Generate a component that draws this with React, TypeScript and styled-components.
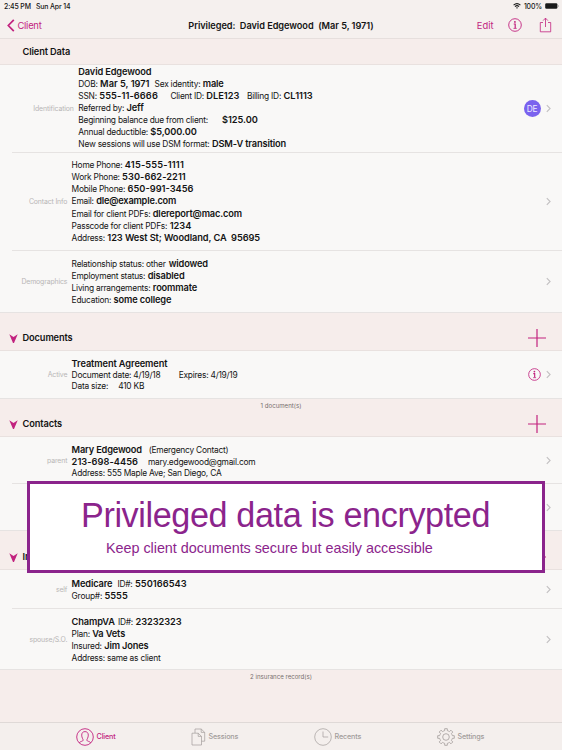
import React from "react";
import styled, { createGlobalStyle } from "styled-components";

const PINK = "#c2237f";

const Global = createGlobalStyle`
  * { box-sizing: border-box; }
  html, body { margin: 0; padding: 0; }
  body { font-family: Inter, "Liberation Sans", sans-serif; color: #141414; background: #f6edeb; }
`;

const Screen = styled.div`
  position: relative;
  width: 562px;
  height: 750px;
  overflow: hidden;
  display: flex;
  flex-direction: column;
  background: #f6edeb;
`;

const StatusBar = styled.div`
  height: 12px;
  flex: none;
  display: flex;
  align-items: center;
  justify-content: space-between;
  padding: 0 3px 0 4px;
  background: #f5f0ee;
  font-size: 6.9px;
  font-weight: 500;
  letter-spacing: -0.12px;
  line-height: 11px;
  white-space: pre;
`;

const StatusGroup = styled.div`
  display: flex;
  align-items: center;
  gap: 3px;
`;

const NavBar = styled.header`
  height: 27px;
  flex: none;
  display: grid;
  grid-template-columns: 1fr auto 1fr;
  align-items: center;
  padding: 0 10px 0 7px;
  background: #f5f0ee;
  border-bottom: 1px solid #e6dfdd;
`;

const BackButton = styled.div`
  display: flex;
  align-items: center;
  gap: 2.5px;
  color: ${PINK};
  font-size: 9.4px;
  letter-spacing: -0.25px;
`;

const NavTitle = styled.h1`
  margin: 0 -1.5px 0 1.5px;
  font-size: 9.2px;
  font-weight: 600;
  letter-spacing: -0.05px;
  white-space: pre;
`;

const NavActions = styled.div`
  display: flex;
  align-items: center;
  justify-content: flex-end;
  color: ${PINK};
  font-size: 9.4px;

  svg:first-of-type { margin: 0 17.5px 0 14px; }
`;

const SectionHeader = styled.div<{ $height: number }>`
  height: ${(p) => p.$height}px;
  flex: none;
  position: relative;
  display: flex;
  align-items: flex-end;
  padding: 0 16px 6px 9px;
  border-bottom: 1px solid #e9e1df;
`;

const SectionMark = styled.span`
  width: 13.5px;
  display: flex;
  align-self: flex-end;
  padding-bottom: 1px;
`;

const SectionTitle = styled.h2`
  margin: 0;
  flex: 1;
  font-size: 9.25px;
  line-height: 12px;
  font-weight: 600;
  letter-spacing: -0.12px;
`;

const AddIcon = styled.span`
  display: flex;
  margin-bottom: -3px;
`;

const SectionNote = styled.div`
  position: absolute;
  top: 2px;
  left: 0;
  width: 562px;
  text-align: center;
  font-size: 6.1px;
  line-height: 9px;
  color: #77706f;
`;

const RecordRow = styled.div<{ $height: number; $last?: boolean }>`
  height: ${(p) => p.$height}px;
  flex: none;
  display: grid;
  grid-template-columns: 67.3px 1fr auto;
  align-items: center;
  padding-right: 11px;
  background:
    linear-gradient(#e6e3e2, #e6e3e2) ${(p) => (p.$last ? "0" : "12px")} 100% / 562px 1px no-repeat,
    #f9f8f7;
`;

const RecordLabel = styled.div<{ $shift?: number }>`
  margin-right: ${(p) => -(p.$shift ?? 0)}px;
  text-align: right;
  font-size: 6.9px;
  line-height: 10px;
  letter-spacing: -0.13px;
  color: #b8b6b6;
`;

const Lines = styled.div<{ $indent: number; $top: number }>`
  align-self: start;
  padding: ${(p) => p.$top}px 0 0 ${(p) => p.$indent}px;
`;

const Line = styled.div<{ $h?: number }>`
  height: ${(p) => p.$h ?? 12.1}px;
  display: flex;
  align-items: baseline;
  line-height: 12px;
  white-space: pre;
`;

const Plain = styled.span<{ $gap?: number }>`
  margin-left: ${(p) => p.$gap ?? 0}px;
  font-size: 8.4px;
  letter-spacing: -0.23px;
`;

const Strong = styled.span<{ $gap?: number; $ls?: number }>`
  margin-left: ${(p) => p.$gap ?? 2.4}px;
  font-size: 9.25px;
  font-weight: 600;
  letter-spacing: ${(p) => p.$ls ?? -0.14}px;
`;

const RowActions = styled.div`
  display: flex;
  align-items: center;
  gap: 5.5px;
  color: ${PINK};
`;

const Avatar = styled.span`
  width: 17px;
  height: 17px;
  border-radius: 50%;
  display: flex;
  align-items: center;
  justify-content: center;
  background: #7a62ee;
  color: #efeaff;
  font-size: 8.3px;
  letter-spacing: -0.2px;
`;

const FooterArea = styled.div`
  position: relative;
  flex: 1;
`;

const TabBar = styled.nav`
  height: 28px;
  flex: none;
  display: grid;
  grid-template-columns: 115px 123px 123px 1fr;
  padding-left: 76px;
  background: #f4efed;
  border-top: 1px solid #dfd9d7;
`;

const Tab = styled.div<{ $active?: boolean }>`
  display: flex;
  align-items: center;
  gap: 2.6px;
  color: ${(p) => (p.$active ? PINK : "#a29c9b")};
  font-size: 7.2px;
  font-weight: 500;
  letter-spacing: -0.17px;
`;

const Banner = styled.div`
  position: absolute;
  left: 27px;
  top: 481px;
  width: 518px;
  height: 92px;
  border: 3px solid #8b248c;
  background: #fff;
  color: #8b248c;
  font-family: "Liberation Sans", sans-serif;
  white-space: pre;
`;

const BannerTitle = styled.div`
  padding: 10px 0 0 51px;
  font-size: 34.2px;
  line-height: 42px;
  letter-spacing: -0.39px;
`;

const BannerText = styled.div`
  padding: 3px 0 0 76px;
  font-size: 14.4px;
  line-height: 18px;
  letter-spacing: -0.04px;
`;

const Chevron = () => (
  <svg width="5" height="9" viewBox="0 0 5 9" fill="none" stroke="#c3c0c2" strokeWidth="1.1">
    <path d="M0.8 1.1 4.1 4.5 0.8 7.9" />
  </svg>
);

const InfoIcon = ({ size }: { size: number }) => (
  <svg width={size} height={size} viewBox="0 0 14 14" fill="none" stroke="currentColor" strokeWidth="0.9">
    <circle cx="7" cy="7" r="6.3" />
    <circle cx="6.9" cy="3.9" r="0.95" fill="currentColor" stroke="none" />
    <path d="M5.7 6H7.2V10.3" strokeWidth="1.2" />
    <path d="M5.5 10.4H8.7" strokeWidth="0.8" />
  </svg>
);

const ShareIcon = () => (
  <svg width="13" height="16" viewBox="0 0 13 16" fill="none" stroke="currentColor" strokeWidth="0.8">
    <path d="M4 5.5H1.3V14.8H11.7V5.5H9M6.5 10V1.2M4.1 3.6 6.5 1.1 8.9 3.6" />
  </svg>
);

const Mark = () => (
  <svg width="9" height="9" viewBox="0 0 9 9">
    <path d="M0.3 0.2 4.5 2.9 8.7 0.2 5 8.9H4Z" fill={PINK} />
  </svg>
);

const Plus = () => (
  <svg width="18" height="18" viewBox="0 0 18 18" stroke={PINK} strokeWidth="1.2">
    <path d="M9 0V18M0 9H18" />
  </svg>
);

const Wifi = () => (
  <svg width="8" height="6" viewBox="0 0 8 6" fill="none" stroke="#1a1a1a" strokeWidth="1.1">
    <path d="M0.6 2.2C2.6 0.3 5.4 0.3 7.4 2.2M2 3.6C3.2 2.5 4.8 2.5 6 3.6" />
    <path d="M4 5.7 3 4.7Q4 3.9 5 4.7Z" fill="#1a1a1a" stroke="none" />
  </svg>
);

const Battery = () => (
  <svg width="14" height="6" viewBox="0 0 14 6">
    <rect x="0.2" y="0.2" width="12.2" height="5.6" rx="1.3" fill="#1a1a1a" />
    <path d="M13 2Q13.9 3 13 4Z" fill="#1a1a1a" />
  </svg>
);

const PersonIcon = () => (
  <svg width="18" height="18" viewBox="0 0 18 18" fill="none" stroke="currentColor" strokeWidth="0.9">
    <circle cx="9" cy="9" r="8.3" />
    <path d="M3.2 14.8C4 13.4 7.2 13.3 7.2 12.2C7.2 11.2 5.7 9.8 5.7 7.1C5.7 4.9 7 3.6 9 3.6S12.3 4.9 12.3 7.1C12.3 9.8 10.8 11.2 10.8 12.2C10.8 13.3 14 13.4 14.8 14.8" />
  </svg>
);

const PagesIcon = () => (
  <svg width="15" height="18" viewBox="0 0 15 18" fill="none" stroke="currentColor" strokeWidth="0.7">
    <path d="M1 5.2H7.2L10.5 8.4V17H1ZM7.2 5.2V8.4H10.5" />
    <path d="M4 5V1H10.2L13.7 4.4V13.2H10.6M10.2 1V4.4H13.7" />
  </svg>
);

const ClockIcon = () => (
  <svg width="18" height="18" viewBox="0 0 18 18" fill="none" stroke="currentColor" strokeWidth="0.7">
    <circle cx="9" cy="9" r="8.3" />
    <path d="M9 3.5V9H14.2" />
  </svg>
);

const teeth = Array.from({ length: 8 }, (_, i) => {
  const at = (r: number, deg: number) => {
    const a = ((i * 45 + deg - 90) * Math.PI) / 180;
    return `${(9 + r * Math.cos(a)).toFixed(2)} ${(9 + r * Math.sin(a)).toFixed(2)}`;
  };
  return `${at(6.5, -12)}L${at(8.4, -9)}L${at(8.4, 9)}L${at(6.5, 12)}L${at(6.4, 22)}`;
}).join("L");

const GearIcon = () => (
  <svg width="18" height="18" viewBox="0 0 18 18" fill="none" stroke="currentColor" strokeWidth="0.8">
    <path d={`M${teeth}Z`} />
    <circle cx="9" cy="9" r="3.3" />
  </svg>
);

export default function App() {
  return (
    <>
      <Global />
      <Screen>
        <StatusBar>
          <StatusGroup>{"2:45 PM   Sun Apr 14"}</StatusGroup>
          <StatusGroup><Wifi />100%<Battery /></StatusGroup>
        </StatusBar>
        <NavBar>
          <BackButton>
            <svg width="8" height="13" viewBox="0 0 8 13" fill="none" stroke="currentColor" strokeWidth="1.7">
              <path d="M6.8 0.8 1.3 6.5 6.8 12.2" />
            </svg>
            Client
          </BackButton>
          <NavTitle>{"Privileged:  David Edgewood  (Mar 5, 1971)"}</NavTitle>
          <NavActions>Edit<InfoIcon size={14} /><ShareIcon /></NavActions>
        </NavBar>

        <SectionHeader $height={25.5}>
          <SectionMark />
          <SectionTitle>Client Data</SectionTitle>
        </SectionHeader>
        <RecordRow $height={88}>
          <RecordLabel $shift={6.5}>Identification</RecordLabel>
          <Lines $indent={11} $top={1}>
            <Line><Strong $gap={0}>David Edgewood</Strong></Line>
            <Line><Plain>DOB:</Plain><Strong $ls={0}>Mar 5, 1971</Strong><Plain $gap={5}>Sex identity:</Plain><Strong>male</Strong></Line>
            <Line><Plain>SSN:</Plain><Strong $ls={0.1}>555-11-6666</Strong><Plain $gap={12.5}>Client ID:</Plain><Strong $ls={0}>DLE123</Strong><Plain $gap={7.5}>Billing ID:</Plain><Strong $ls={0}>CL1113</Strong></Line>
            <Line><Plain>Referred by:</Plain><Strong>Jeff</Strong></Line>
            <Line><Plain>Beginning balance due from client:</Plain><Strong $gap={14} $ls={-0.05}>$125.00</Strong></Line>
            <Line><Plain>Annual deductible:</Plain><Strong $ls={-0.1}>$5,000.00</Strong></Line>
            <Line><Plain>New sessions will use DSM format:</Plain><Strong>DSM-V transition</Strong></Line>
          </Lines>
          <RowActions><Avatar>DE</Avatar><Chevron /></RowActions>
        </RecordRow>
        <RecordRow $height={98}>
          <RecordLabel>Contact Info</RecordLabel>
          <Lines $indent={4.3} $top={6.7}>
            <Line><Plain>Home Phone:</Plain><Strong $ls={0.15}>415-555-1111</Strong></Line>
            <Line><Plain>Work Phone:</Plain><Strong $ls={0.05}>530-662-2211</Strong></Line>
            <Line><Plain>Mobile Phone:</Plain><Strong $ls={0}>650-991-3456</Strong></Line>
            <Line><Plain>Email:</Plain><Strong $ls={-0.2}>dle@example.com</Strong></Line>
            <Line><Plain>Email for client PDFs:</Plain><Strong>dlereport@mac.com</Strong></Line>
            <Line><Plain>Passcode for client PDFs:</Plain><Strong $ls={0}>1234</Strong></Line>
            <Line><Plain>Address:</Plain><Strong $ls={-0.08}>{"123 West St; Woodland, CA  95695"}</Strong></Line>
          </Lines>
          <RowActions><Chevron /></RowActions>
        </RecordRow>
        <RecordRow $height={62} $last>
          <RecordLabel>Demographics</RecordLabel>
          <Lines $indent={4.3} $top={7}>
            <Line><Plain>Relationship status: other</Plain><Strong $gap={3}>widowed</Strong></Line>
            <Line><Plain>Employment status:</Plain><Strong>disabled</Strong></Line>
            <Line><Plain>Living arrangements:</Plain><Strong>roommate</Strong></Line>
            <Line><Plain>Education:</Plain><Strong>some college</Strong></Line>
          </Lines>
          <RowActions><Chevron /></RowActions>
        </RecordRow>

        <SectionHeader $height={38.5}>
          <SectionMark><Mark /></SectionMark>
          <SectionTitle>Documents</SectionTitle>
          <AddIcon><Plus /></AddIcon>
        </SectionHeader>
        <RecordRow $height={47.5} $last>
          <RecordLabel>Active</RecordLabel>
          <Lines $indent={4.3} $top={6.5}>
            <Line $h={11.4}><Strong $gap={0} $ls={-0.1}>Treatment Agreement</Strong></Line>
            <Line $h={11.2}><Plain>Document date: 4/19/18</Plain><Plain $gap={18.3}>Expires: 4/19/19</Plain></Line>
            <Line><Plain>Data size:</Plain><Plain $gap={10}>410 KB</Plain></Line>
          </Lines>
          <RowActions><InfoIcon size={13} /><Chevron /></RowActions>
        </RecordRow>

        <SectionHeader $height={38.5}>
          <SectionNote>1 document(s)</SectionNote>
          <SectionMark><Mark /></SectionMark>
          <SectionTitle>Contacts</SectionTitle>
          <AddIcon><Plus /></AddIcon>
        </SectionHeader>
        <RecordRow $height={47}>
          <RecordLabel>parent</RecordLabel>
          <Lines $indent={4.3} $top={7}>
            <Line><Strong $gap={0} $ls={-0.18}>Mary Edgewood</Strong><Plain $gap={6.8}>(Emergency Contact)</Plain></Line>
            <Line $h={11.4}><Strong $gap={0} $ls={0.03}>213-698-4456</Strong><Plain $gap={10}>mary.edgewood@gmail.com</Plain></Line>
            <Line><Plain>Address: 555 Maple Ave; San Diego, CA</Plain></Line>
          </Lines>
          <RowActions><Chevron /></RowActions>
        </RecordRow>
        <RecordRow $height={47} $last>
          <RecordLabel />
          <span />
          <RowActions><Chevron /></RowActions>
        </RecordRow>

        <SectionHeader $height={39}>
          <SectionMark><Mark /></SectionMark>
          <SectionTitle>Insurance</SectionTitle>
          <AddIcon><Plus /></AddIcon>
        </SectionHeader>
        <RecordRow $height={39}>
          <RecordLabel>self</RecordLabel>
          <Lines $indent={4.3} $top={8}>
            <Line><Strong $gap={0}>Medicare</Strong><Plain $gap={5}>ID#:</Plain><Strong $ls={0.05}>550166543</Strong></Line>
            <Line><Plain>Group#:</Plain><Strong $ls={0}>5555</Strong></Line>
          </Lines>
          <RowActions><Chevron /></RowActions>
        </RecordRow>
        <RecordRow $height={61} $last>
          <RecordLabel>spouse/S.O.</RecordLabel>
          <Lines $indent={4.3} $top={7}>
            <Line><Strong $gap={0}>ChampVA</Strong><Plain $gap={3.2}>ID#:</Plain><Strong $ls={-0.05}>23232323</Strong></Line>
            <Line><Plain>Plan:</Plain><Strong>Va Vets</Strong></Line>
            <Line $h={11.4}><Plain>Insured:</Plain><Strong>Jim Jones</Strong></Line>
            <Line><Plain>Address: same as client</Plain></Line>
          </Lines>
          <RowActions><Chevron /></RowActions>
        </RecordRow>
        <FooterArea><SectionNote>2 insurance record(s)</SectionNote></FooterArea>

        <TabBar>
          <Tab $active><PersonIcon />Client</Tab>
          <Tab><PagesIcon />Sessions</Tab>
          <Tab><ClockIcon />Recents</Tab>
          <Tab><GearIcon />Settings</Tab>
        </TabBar>

        <Banner>
          <BannerTitle>Privileged data is encrypted</BannerTitle>
          <BannerText>Keep client documents secure but easily accessible</BannerText>
        </Banner>
      </Screen>
    </>
  );
}
